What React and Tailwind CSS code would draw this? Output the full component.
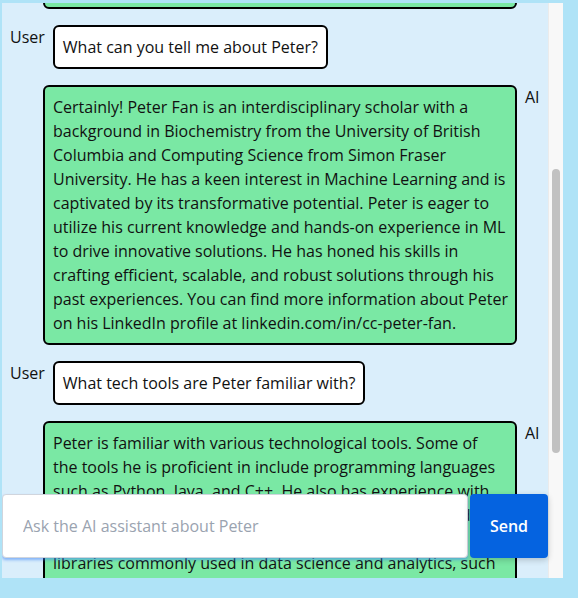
const font = { fontFamily: '"Open Sans", "Noto Sans", sans-serif' };

const UserRow = ({ text }) => (
    <div className="flex items-start gap-2">
        <span className="leading-6 text-[#111]">User</span>
        <div className="bg-white border-2 border-black rounded-md p-2 leading-6 text-[#111]">{text}</div>
    </div>
);

const AiRow = ({ lines }) => (
    <div className="flex items-start justify-end gap-2">
        <div className="w-[474px] bg-[#7ae8a4] border-2 border-black rounded-md p-2 leading-6 text-[#111]">
            {lines.map((l, i) => (
                <span key={i} className="block whitespace-nowrap">{l}</span>
            ))}
        </div>
        <span className="w-[15px] leading-6 text-[#111]">AI</span>
    </div>
);

const answer1 = [
    'Certainly! Peter Fan is an interdisciplinary scholar with a',
    'background in Biochemistry from the University of British',
    'Columbia and Computing Science from Simon Fraser',
    'University. He has a keen interest in Machine Learning and is',
    'captivated by its transformative potential. Peter is eager to',
    'utilize his current knowledge and hands-on experience in ML',
    'to drive innovative solutions. He has honed his skills in',
    'crafting efficient, scalable, and robust solutions through his',
    'past experiences. You can find more information about Peter',
    'on his LinkedIn profile at linkedin.com/in/cc-peter-fan.',
];

const answer2 = [
    'Peter is familiar with various technological tools. Some of',
    'the tools he is proficient in include programming languages',
    'such as Python, Java, and C++. He also has experience with',
    'frameworks and tools such as TensorFlow, PyTorch, and',
    'scikit-learn, as well as Pandas, NumPy, and other',
    'libraries commonly used in data science and analytics, such',
    'as Matplotlib and Seaborn.',
];

const App = () => {
    return (
        <div className="w-full h-[598px] bg-[#afe3f7] pt-[3px] pl-[2px]" style={font}>
            {/* chat panel */}
            <div className="relative w-[561px] h-[575px] flex bg-[#daeefb] overflow-hidden">
                <div className="flex-1 overflow-hidden">
                    <div className="flex flex-col gap-4 px-2 -mt-[38px] text-base">
                        <AiRow lines={['Feel free to ask me anything about Peter.']} />
                        <UserRow text="What can you tell me about Peter?" />
                        <AiRow lines={answer1} />
                        <UserRow text="What tech tools are Peter familiar with?" />
                        <AiRow lines={answer2} />
                    </div>
                </div>

                {/* scrollbar */}
                <div className="w-[15px] shrink-0 bg-[#f8f8f8] border-l border-[#ebebeb]">
                    <div className="ml-[3px] mt-[166px] w-[8px] h-[284px] rounded-full bg-[#c1c1c1]" />
                </div>

                {/* input bar */}
                <div className="absolute left-0 bottom-[20px] flex gap-[2px] h-[64px]">
                    <input
                        className="w-[466px] h-full bg-white rounded-[4px] border border-[#d0d5dd] px-5 text-base text-[#111] placeholder:text-[#9aa3b0] shadow-[0_2px_3px_rgba(59,130,246,0.55)] outline-none"
                        placeholder="Ask the AI assistant about Peter"
                        style={font}
                    />
                    <button className="w-[78px] h-full bg-[#0563e0] text-white font-semibold rounded-[4px] shadow-[0_2px_6px_rgba(0,0,0,0.2)]">
                        Send
                    </button>
                </div>
            </div>
        </div>
    );
};

export default App;
